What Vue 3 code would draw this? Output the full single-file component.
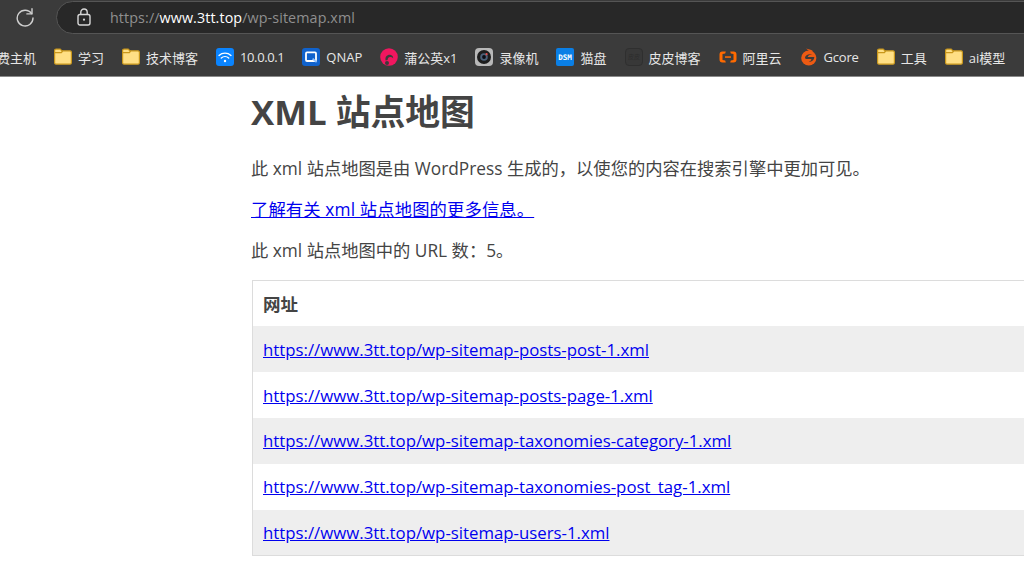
<script setup>
const bookmarks = [
  { icon: 'folder', label: '学习' },
  { icon: 'folder', label: '技术博客' },
  { icon: 'wifi', label: '10.0.0.1', fit: 'tight' },
  { icon: 'qnap', label: 'QNAP' },
  { icon: 'pgy', label: '蒲公英x1' },
  { icon: 'cam', label: '录像机' },
  { icon: 'dsm', label: '猫盘' },
  { icon: 'pipi', label: '皮皮博客' },
  { icon: 'ali', label: '阿里云' },
  { icon: 'gcore', label: 'Gcore', fit: 'snug' },
  { icon: 'folder', label: '工具' },
  { icon: 'folder', label: 'ai模型' },
]
const urls = [
  'https://www.3tt.top/wp-sitemap-posts-post-1.xml',
  'https://www.3tt.top/wp-sitemap-posts-page-1.xml',
  'https://www.3tt.top/wp-sitemap-taxonomies-category-1.xml',
  'https://www.3tt.top/wp-sitemap-taxonomies-post_tag-1.xml',
  'https://www.3tt.top/wp-sitemap-users-1.xml',
]
</script>

<template>
  <div class="screen">
    <header class="toolbar">
      <svg class="reload" width="20" height="20" viewBox="0 0 20 20" fill="none" stroke="#d0d0d0" stroke-width="1.4">
        <path d="M16.6 6.6A7.9 7.9 0 1 0 18 11" stroke-linecap="round" />
        <path d="M17 1.800V6.900H11.900" stroke-linejoin="round" stroke-linecap="round" />
      </svg>
      <div class="omnibox">
        <svg width="14" height="18" viewBox="0 0 14 18" fill="none" stroke="#d8d8d8" stroke-width="1.4">
          <rect x="1" y="6.5" width="12" height="10.5" rx="2" />
          <path d="M3.800 6.500V4.200a3.200 3.200 0 0 1 6.400 0v2.300" />
          <circle cx="7" cy="11.700" r="1.100" fill="#d8d8d8" stroke="none" />
        </svg>
        <span class="url"><span class="dim">https://</span><span class="host">www.3tt.top</span><span class="dim">/wp-sitemap.xml</span></span>
      </div>
    </header>

    <nav class="bookmarks">
      <span class="clipped">费主机</span>
      <a v-for="b in bookmarks" :key="b.label" class="bookmark">
        <svg class="bm-icon" width="18" height="18" viewBox="0 0 18 18">
          <template v-if="b.icon === 'folder'">
            <path d="M.6 2.600c0-.9.600-1.500 1.500-1.500h4.100l1.700 1.700h8c.9 0 1.500.6 1.500 1.500v10.400c0 .9-.6 1.500-1.500 1.500H2.100c-.9 0-1.500-.6-1.500-1.500z" fill="#ffdf85" stroke="#c9971c" stroke-width="1.200" />
            <path d="M.9 4.700h6.400l1.400-1.700" fill="none" stroke="#c9971c" stroke-width="1.200" />
          </template>
          <template v-else-if="b.icon === 'wifi'">
            <rect width="18" height="18" rx="3" fill="#0a84ff" />
            <path d="M3 7.400a9 9 0 0 1 12 0M5.300 10a5.600 5.600 0 0 1 7.400 0" fill="none" stroke="#fff" stroke-width="1.400" stroke-linecap="round" />
            <circle cx="9" cy="13" r="1.200" fill="#fff" />
          </template>
          <template v-else-if="b.icon === 'qnap'">
            <rect width="18" height="18" rx="3" fill="#1062cc" />
            <rect x="4" y="4.400" width="10" height="8.600" rx="1" fill="none" stroke="#fff" stroke-width="1.800" />
            <path d="M10.600 10.600l4 3.600" stroke="#8fc1ff" stroke-width="1.800" />
          </template>
          <template v-else-if="b.icon === 'pgy'">
            <circle cx="9" cy="9" r="8.800" fill="#f0165f" />
            <path d="M5.600 12.400c-.8-3.600 1.600-5.900 4.600-5.600 2 .2 3.200 1.800 2.900 3.400-1-1.200-2.600-1.600-4-.9-1.200.6-1.500 1.700-1.400 2.700z" fill="#3b3b3b" />
            <circle cx="7" cy="15" r="2" fill="#3b3b3b" />
          </template>
          <template v-else-if="b.icon === 'cam'">
            <rect width="18" height="18" rx="4" fill="#b8b8b8" />
            <circle cx="9" cy="9" r="7" fill="#1d1d1d" />
            <circle cx="9" cy="9" r="3.800" fill="#4b6078" />
            <circle cx="9" cy="9" r="1.900" fill="#0c0c14" />
            <circle cx="11.600" cy="6.200" r="1.100" fill="#e34a4a" />
          </template>
          <template v-else-if="b.icon === 'dsm'">
            <rect width="18" height="18" rx="2" fill="#0a7fe6" />
            <text x="9" y="11.800" class="dsm-text" text-anchor="middle">DSM</text>
          </template>
          <template v-else-if="b.icon === 'pipi'">
            <rect x=".5" y=".5" width="17" height="17" rx="3.500" fill="#383838" stroke="#2f2f2f" />
            <text x="9" y="11.400" class="pipi-text" text-anchor="middle">皮皮</text>
          </template>
          <template v-else-if="b.icon === 'ali'">
            <path d="M6.800 3.600H3.400A2.900 2.900 0 0 0 .5 6.500v5a2.900 2.900 0 0 0 2.900 2.900h3.400l-.6-1.900-2.700-.6V6.100l2.700-.6zM11.200 3.600h3.400a2.900 2.900 0 0 1 2.900 2.900v5a2.900 2.900 0 0 1-2.900 2.900h-3.400l.6-1.900 2.700-.6V6.100l-2.700-.6z" fill="#ff6a00" />
            <rect x="6" y="8.300" width="6" height="1.500" fill="#ff6a00" />
          </template>
          <template v-else-if="b.icon === 'gcore'">
            <circle cx="8.800" cy="10" r="7.600" fill="#ec5a13" />
            <path d="M6 .4c2 .6 5.800 1 7.400 3.200L10 3.800z" fill="#ec5a13" />
            <path d="M5 9.500c.5-2.600 3.300-3.900 7.300-3-2.600-.1-4.300 1-4.600 2.500h6.600c-.1 3-2.300 5-5.500 4.900 1.500-.6 2.400-1.600 2.600-2.900H6.300c-.7 0-1.300-.7-1.300-1.500z" fill="#3b3b3b" />
          </template>
        </svg>
        <span :class="b.fit">{{ b.label }}</span>
      </a>
    </nav>

    <main class="page">
      <h1>XML 站点地图</h1>
      <p>此 xml 站点地图是由 WordPress 生成的，以使您的内容在搜索引擎中更加可见。</p>
      <p><a href="#" class="link wide">了解有关 xml 站点地图的更多信息。</a></p>
      <p>此 xml 站点地图中的 URL 数：5。</p>
      <table>
        <thead>
          <tr><th>网址</th></tr>
        </thead>
        <tbody>
          <tr v-for="u in urls" :key="u"><td><a href="#" class="link">{{ u }}</a></td></tr>
        </tbody>
      </table>
    </main>
  </div>
</template>

<style>
html, body { margin: 0; background: #fff; overflow: hidden; }
</style>

<style scoped>
.screen {
  width: 1024px;
  height: 568px;
  overflow: hidden;
  background: #fff;
  font-family: "Open Sans", "Noto Sans CJK SC", sans-serif;
}
.toolbar {
  height: 34px;
  background: #3b3b3b;
  display: flex;
  align-items: center;
  padding-left: 15px;
  box-sizing: border-box;
}
.reload { flex: none; }
.omnibox {
  flex: none;
  margin-left: 21px;
  width: 1100px;
  height: 33px;
  box-sizing: border-box;
  background: #282828;
  border: 1px solid #555;
  border-radius: 17px;
  display: flex;
  align-items: center;
  padding-left: 20px;
  gap: 19px;
}
.url { font-size: 14.3px; letter-spacing: 0.1px; white-space: nowrap; }
.dim { color: #8f8f8f; }
.host { color: #fff; }
.bookmarks {
  height: 43px;
  padding-top: 4px;
  background: #3b3b3b;
  border-bottom: 1px solid #8a8a8a;
  box-sizing: border-box;
  display: flex;
  align-items: center;
  gap: 18px;
  margin-left: -3px;
  font-size: 13px;
  color: #e6e6e6;
  white-space: nowrap;
}
.bookmark { display: flex; align-items: center; gap: 6px; flex: none; }
.bm-icon { flex: none; }
.tight { letter-spacing: -0.4px; }
.snug { letter-spacing: -0.2px; }
.dsm-text { font: 700 7.6px "DejaVu Sans Mono", monospace; fill: #fff; }
.pipi-text { font: 6px "Noto Sans CJK SC", sans-serif; fill: #2c2c2c; }
.page {
  padding-left: 251px;
  width: 1000px;
  color: #444;
}
h1 {
  margin: 0;
  padding-top: 13px;
  font-size: 34.8px;
  line-height: 44px;
  font-weight: 700;
  color: #444;
}
p {
  margin: 0;
  font-size: 17.3px;
  line-height: 22px;
}
h1 + p { margin-top: 24px; }
p + p { margin-top: 19px; }
.link { color: #00e; text-decoration: underline; }
.wide { letter-spacing: 0.15px; }
table {
  margin-top: 18px;
  margin-left: 1px;
  width: 900px;
  border-collapse: collapse;
  border: 1px solid #dcdcdc;
  font-size: 16.8px;
}
th, td {
  padding: 0 10px;
  height: 45.85px;
  box-sizing: border-box;
  text-align: left;
}
th { font-weight: 700; font-size: 17.5px; }
tbody tr:nth-child(odd) { background: #eee; }
.clipped { flex: none; }
</style>
